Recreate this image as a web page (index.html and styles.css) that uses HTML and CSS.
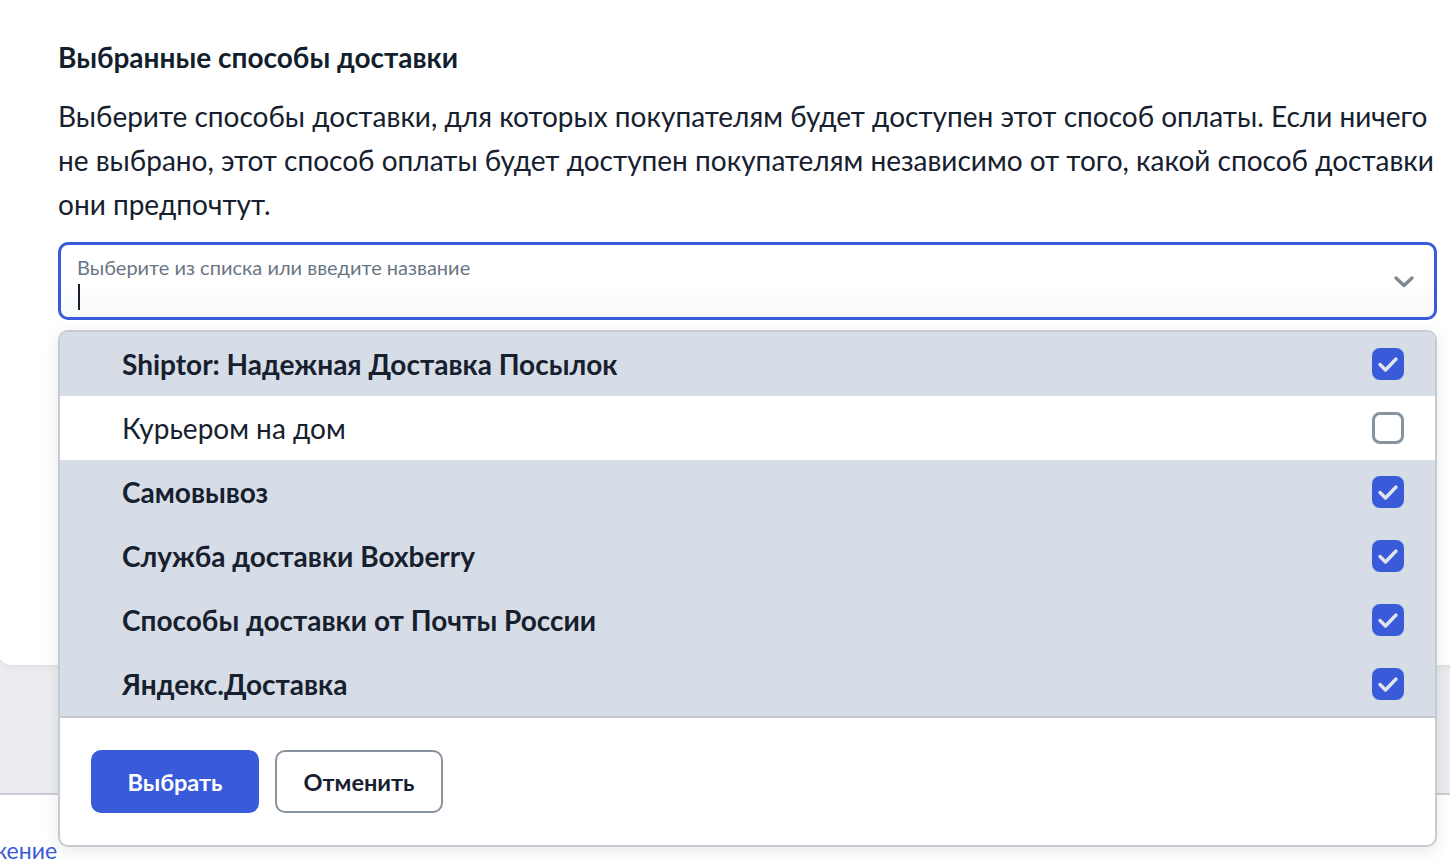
FILE: index.html
```html
<!DOCTYPE html>
<html lang="ru">
<head>
<meta charset="utf-8">
<link rel="stylesheet" href="styles.css">
</head>
<body>
<div class="page">
  <section class="card">
    <h2 class="title">Выбранные способы доставки</h2>
    <p class="desc">Выберите способы доставки, для которых покупателям будет доступен этот способ оплаты. Если ничего не выбрано, этот способ оплаты будет доступен покупателям независимо от того, какой способ доставки они предпочтут.</p>
    <div class="combo">
      <div class="field">
        <div class="field-label">Выберите из списка или введите название</div>
        <div class="caret"></div>
      </div>
      <svg class="chevron" width="22" height="14" viewBox="0 0 22 14"><path d="M3 3 L11 10.5 L19 3" fill="none" stroke="#7f8995" stroke-width="3.4" stroke-linecap="round" stroke-linejoin="round"/></svg>
      <div class="menu">
        <ul class="options">
          <li class="option selected"><span>Shiptor: Надежная Доставка Посылок</span><span class="box checked"><svg viewBox="0 0 32 32"><path d="M8 16.5 L13.5 22 L24 11" fill="none" stroke="#dfe5ee" stroke-width="3.4" stroke-linecap="round" stroke-linejoin="round"/></svg></span></li>
          <li class="option"><span>Курьером на дом</span><span class="box"></span></li>
          <li class="option selected"><span>Самовывоз</span><span class="box checked"><svg viewBox="0 0 32 32"><path d="M8 16.5 L13.5 22 L24 11" fill="none" stroke="#dfe5ee" stroke-width="3.4" stroke-linecap="round" stroke-linejoin="round"/></svg></span></li>
          <li class="option selected"><span>Служба доставки Boxberry</span><span class="box checked"><svg viewBox="0 0 32 32"><path d="M8 16.5 L13.5 22 L24 11" fill="none" stroke="#dfe5ee" stroke-width="3.4" stroke-linecap="round" stroke-linejoin="round"/></svg></span></li>
          <li class="option selected"><span>Способы доставки от Почты России</span><span class="box checked"><svg viewBox="0 0 32 32"><path d="M8 16.5 L13.5 22 L24 11" fill="none" stroke="#dfe5ee" stroke-width="3.4" stroke-linecap="round" stroke-linejoin="round"/></svg></span></li>
          <li class="option selected"><span>Яндекс.Доставка</span><span class="box checked"><svg viewBox="0 0 32 32"><path d="M8 16.5 L13.5 22 L24 11" fill="none" stroke="#dfe5ee" stroke-width="3.4" stroke-linecap="round" stroke-linejoin="round"/></svg></span></li>
        </ul>
        <div class="menu-footer">
          <button class="btn btn-primary">Выбрать</button>
          <button class="btn btn-secondary">Отменить</button>
        </div>
      </div>
    </div>
  </section>
  <div class="band"></div>
  <footer class="bottom">
    <a class="link" href="#">Приложение</a>
  </footer>
</div>
</body>
</html>
```

FILE: styles.css
```css
* { box-sizing: border-box; }
html, body { margin: 0; padding: 0; }
body {
  font-family: Lato, "Noto Sans", sans-serif;
  color: #16202e;
  background: #ebedf0;
  width: 1450px;
  height: 860px;
  overflow: hidden;
}
.page {
  display: flex;
  flex-direction: column;
  height: 860px;
}
.card {
  background: #fff;
  height: 665px;
  flex: none;
  margin: 0 -20px 0 -2px;
  padding: 39px 0 0 60px;
  border-radius: 0 0 14px 14px;
  box-shadow: 0 2px 10px rgba(0,0,0,0.06);
  position: relative;
  z-index: 1;
}
.title {
  margin: 0;
  font-size: 28px;
  line-height: 36px;
  font-weight: 700;
  color: #141f2d;
}
.desc {
  margin: 19px 0 0 0;
  width: 1392px;
  font-size: 28px;
  line-height: 44px;
  color: #16202e;
}
.combo {
  position: relative;
  width: 1379px;
  margin-top: 16px;
}
.field {
  height: 78px;
  border: 3px solid #3a5bd9;
  border-radius: 10px;
  padding: 10px 16px 0 16px;
  background: linear-gradient(#fff 60%, #f7f8f9);
}
.field-label {
  font-size: 20px;
  line-height: 25px;
  color: #6a7584;
}
.caret {
  width: 2px;
  height: 26px;
  background: #16202e;
  margin-top: 4px;
  margin-left: 1px;
}
.chevron {
  position: absolute;
  right: 22px;
  top: 33px;
}
.menu {
  position: absolute;
  left: 0;
  top: 88px;
  width: 1379px;
  background: #fff;
  border: 2px solid #c6cbd2;
  border-radius: 10px;
  box-shadow: 0 4px 16px rgba(20,30,45,0.10);
  overflow: hidden;
}
.options {
  list-style: none;
  margin: 0;
  padding: 0;
}
.option {
  height: 64px;
  display: flex;
  align-items: center;
  justify-content: space-between;
  padding: 0 31px 0 62px;
  font-size: 28px;
  color: #16202e;
  background: #fff;
}
.option.selected {
  background: #d6dde6;
  font-weight: 700;
}
.box {
  width: 32px;
  height: 32px;
  border-radius: 8px;
  border: 3px solid #8893a0;
  display: block;
}
.box.checked {
  border: none;
  background: #3a5bd9;
}
.box svg { display: block; width: 32px; height: 32px; }
.menu-footer {
  border-top: 2px solid #c6cbd2;
  padding: 32px 31px 32px 31px;
  display: flex;
  gap: 16px;
}
.btn {
  font-family: Lato, "Noto Sans", sans-serif;
  font-size: 23.5px;
  font-weight: 700;
  height: 63px;
  width: 168px;
  border-radius: 10px;
  cursor: pointer;
}
.btn-primary {
  background: #3a5bd9;
  color: #fff;
  border: none;
}
.btn-secondary {
  background: #fff;
  color: #16202e;
  border: 2px solid #8893a0;
}
.band {
  height: 130px;
  flex: none;
  border-bottom: 2px solid #c9cdd3;
}
.bottom {
  flex: 1;
  background: #fff;
  padding-top: 41px;
}
.link {
  display: inline-block;
  margin-left: -80px;
  font-size: 23px;
  line-height: 28px;
  color: #3a5bd9;
  text-decoration: none;
}
```
